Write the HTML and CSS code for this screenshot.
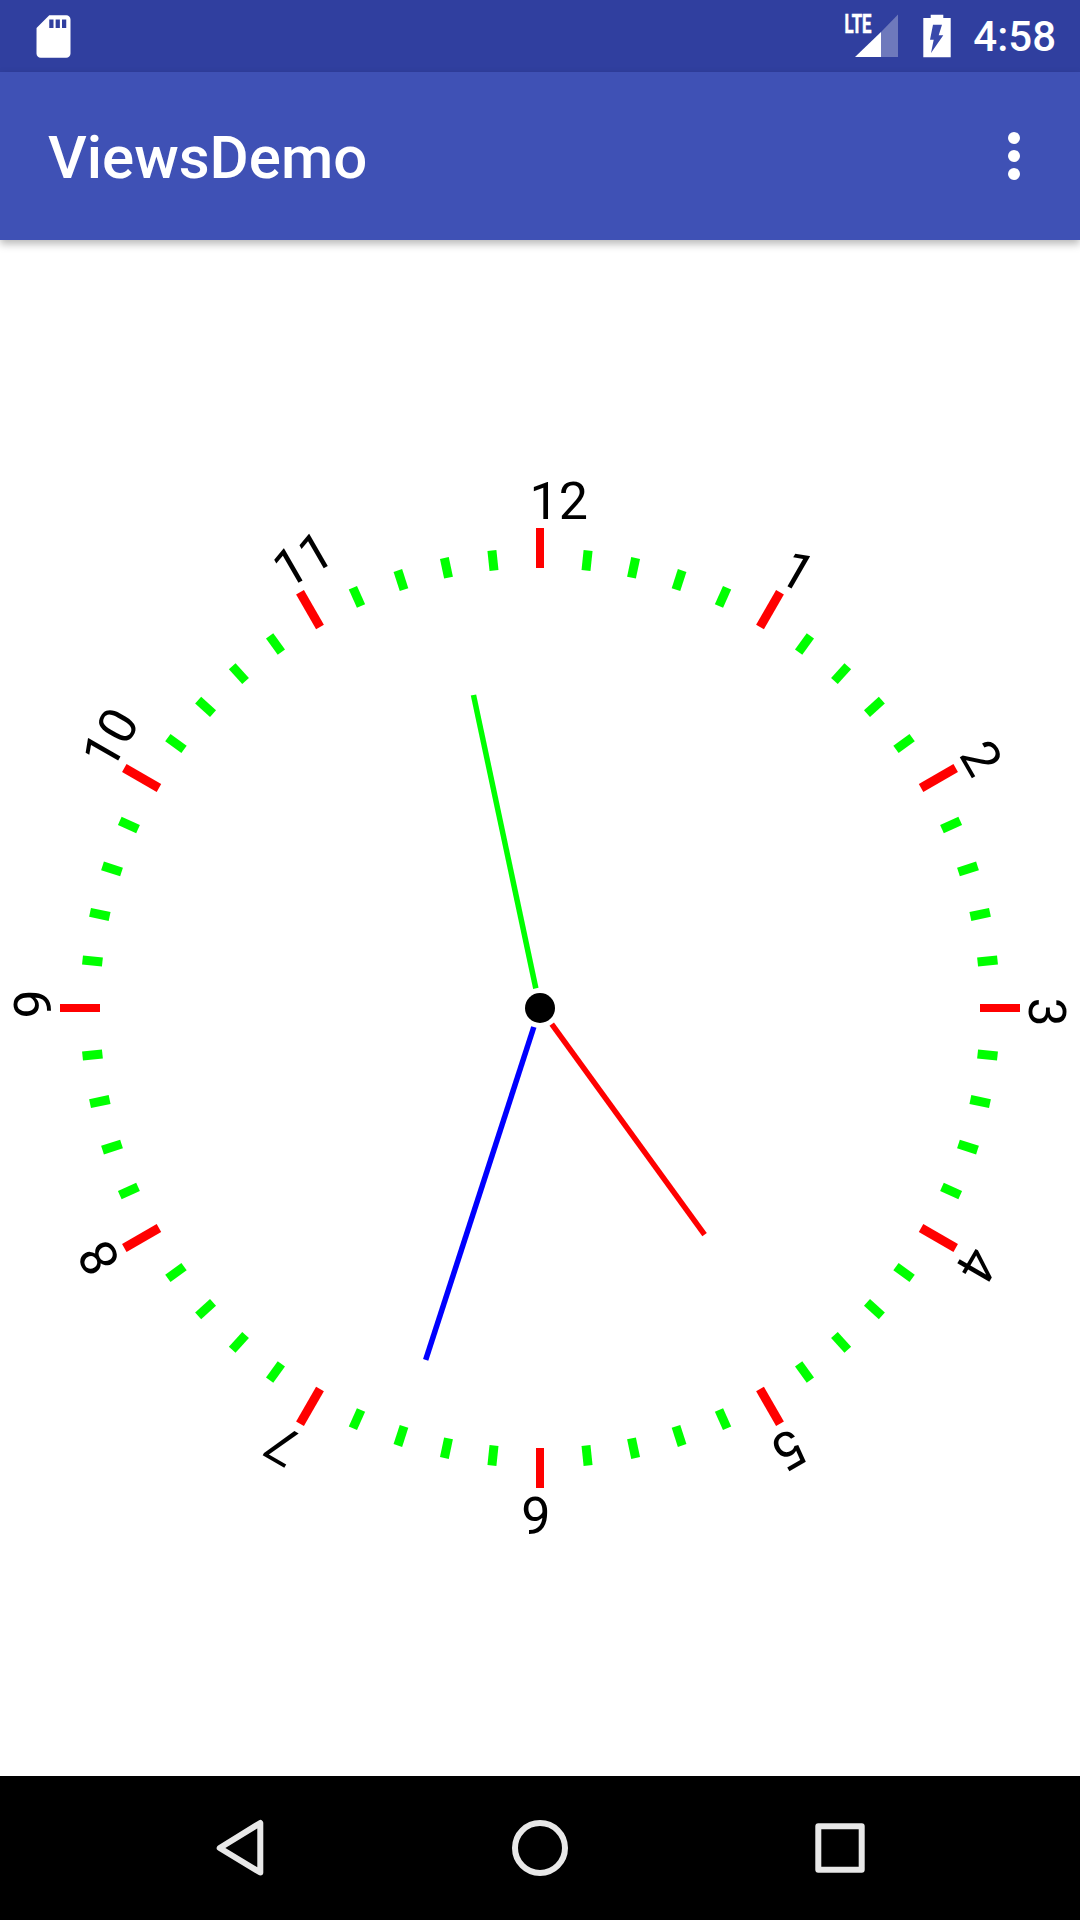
FILE: index.html
```html
<!DOCTYPE html>
<html lang="en">
<head>
    <meta charset="UTF-8">
    <title>ViewsDemo</title>
    <link rel="stylesheet" href="styles.css">
</head>
<body>

    <div class="status-bar">
        <svg class="sd-icon" viewBox="0 0 24 24">
            <path d="M18 2h-8L4.02 8 4 20c0 1.1.9 2 2 2h12c1.1 0 2-.9 2-2V4c0-1.1-.9-2-2-2zm-6 6h-2V4h2v4zm3 0h-2V4h2v4zm3 0h-2V4h2v4z"/>
        </svg>
        <div class="status-right">
            <svg class="status-icons" viewBox="840 8 112 56">
                <text class="lte" x="844.5" y="33.4" textLength="27" lengthAdjust="spacingAndGlyphs">LTE</text>
                <polygon class="signal-empty" points="881,32 898,14.5 898,57 881,57"/>
                <polygon class="signal-full" points="855,57 881,32 881,57"/>
                <path class="battery" d="M930.7 14.7h12.6v3.3h7.4v39.3h-27.4v-39.3h7.4z"/>
                <polygon class="bolt" points="933,24.7 942,24.7 938.7,35.3 943.3,35.3 931,53 933.7,39.7 930,39.7"/>
            </svg>
            <span class="clock-time">4:58</span>
        </div>
    </div>

    <div class="app-bar">
        <h1 class="app-title">ViewsDemo</h1>
        <div class="menu-dots">
            <span class="dot"></span>
            <span class="dot"></span>
            <span class="dot"></span>
        </div>
    </div>

    <div class="content">
        <svg class="clock" viewBox="-540 -768 1080 1536">
            <!-- minute marks -->
            <g class="tick-minor">
                <line y1="-460" y2="-440" transform="rotate(6)"/>
                <line y1="-460" y2="-440" transform="rotate(12)"/>
                <line y1="-460" y2="-440" transform="rotate(18)"/>
                <line y1="-460" y2="-440" transform="rotate(24)"/>
                <line y1="-460" y2="-440" transform="rotate(36)"/>
                <line y1="-460" y2="-440" transform="rotate(42)"/>
                <line y1="-460" y2="-440" transform="rotate(48)"/>
                <line y1="-460" y2="-440" transform="rotate(54)"/>
                <line y1="-460" y2="-440" transform="rotate(66)"/>
                <line y1="-460" y2="-440" transform="rotate(72)"/>
                <line y1="-460" y2="-440" transform="rotate(78)"/>
                <line y1="-460" y2="-440" transform="rotate(84)"/>
                <line y1="-460" y2="-440" transform="rotate(96)"/>
                <line y1="-460" y2="-440" transform="rotate(102)"/>
                <line y1="-460" y2="-440" transform="rotate(108)"/>
                <line y1="-460" y2="-440" transform="rotate(114)"/>
                <line y1="-460" y2="-440" transform="rotate(126)"/>
                <line y1="-460" y2="-440" transform="rotate(132)"/>
                <line y1="-460" y2="-440" transform="rotate(138)"/>
                <line y1="-460" y2="-440" transform="rotate(144)"/>
                <line y1="-460" y2="-440" transform="rotate(156)"/>
                <line y1="-460" y2="-440" transform="rotate(162)"/>
                <line y1="-460" y2="-440" transform="rotate(168)"/>
                <line y1="-460" y2="-440" transform="rotate(174)"/>
                <line y1="-460" y2="-440" transform="rotate(186)"/>
                <line y1="-460" y2="-440" transform="rotate(192)"/>
                <line y1="-460" y2="-440" transform="rotate(198)"/>
                <line y1="-460" y2="-440" transform="rotate(204)"/>
                <line y1="-460" y2="-440" transform="rotate(216)"/>
                <line y1="-460" y2="-440" transform="rotate(222)"/>
                <line y1="-460" y2="-440" transform="rotate(228)"/>
                <line y1="-460" y2="-440" transform="rotate(234)"/>
                <line y1="-460" y2="-440" transform="rotate(246)"/>
                <line y1="-460" y2="-440" transform="rotate(252)"/>
                <line y1="-460" y2="-440" transform="rotate(258)"/>
                <line y1="-460" y2="-440" transform="rotate(264)"/>
                <line y1="-460" y2="-440" transform="rotate(276)"/>
                <line y1="-460" y2="-440" transform="rotate(282)"/>
                <line y1="-460" y2="-440" transform="rotate(288)"/>
                <line y1="-460" y2="-440" transform="rotate(294)"/>
                <line y1="-460" y2="-440" transform="rotate(306)"/>
                <line y1="-460" y2="-440" transform="rotate(312)"/>
                <line y1="-460" y2="-440" transform="rotate(318)"/>
                <line y1="-460" y2="-440" transform="rotate(324)"/>
                <line y1="-460" y2="-440" transform="rotate(336)"/>
                <line y1="-460" y2="-440" transform="rotate(342)"/>
                <line y1="-460" y2="-440" transform="rotate(348)"/>
                <line y1="-460" y2="-440" transform="rotate(354)"/>
            </g>
            <!-- hour marks -->
            <g class="tick-major">
                <line class="tick-straight" y1="-480" y2="-440"/>
                <line y1="-480" y2="-440" transform="rotate(30)"/>
                <line y1="-480" y2="-440" transform="rotate(60)"/>
                <line class="tick-straight" y1="-480" y2="-440" transform="rotate(90)"/>
                <line y1="-480" y2="-440" transform="rotate(120)"/>
                <line y1="-480" y2="-440" transform="rotate(150)"/>
                <line class="tick-straight" y1="-480" y2="-440" transform="rotate(180)"/>
                <line y1="-480" y2="-440" transform="rotate(210)"/>
                <line y1="-480" y2="-440" transform="rotate(240)"/>
                <line class="tick-straight" y1="-480" y2="-440" transform="rotate(270)"/>
                <line y1="-480" y2="-440" transform="rotate(300)"/>
                <line y1="-480" y2="-440" transform="rotate(330)"/>
            </g>
            <g class="numbers">
                <text x="-10.5" y="-489">12</text>
                <text x="-10.5" y="-489" transform="rotate(30)">1</text>
                <text x="-10.5" y="-489" transform="rotate(60)">2</text>
                <text x="-10.5" y="-489" transform="rotate(90)">3</text>
                <text x="-10.5" y="-489" transform="rotate(120)">4</text>
                <text x="-10.5" y="-489" transform="rotate(150)">5</text>
                <text x="-10.5" y="-489" transform="rotate(180)">6</text>
                <text x="-10.5" y="-489" transform="rotate(210)">7</text>
                <text x="-10.5" y="-489" transform="rotate(240)">8</text>
                <text x="-10.5" y="-489" transform="rotate(270)">9</text>
                <text x="-10.5" y="-489" transform="rotate(300)">10</text>
                <text x="-10.5" y="-489" transform="rotate(330)">11</text>
            </g>
            <line class="hand hand-hour" y1="-280" y2="-20" transform="rotate(144)"/>
            <line class="hand hand-minute" y1="-320" y2="-20" transform="rotate(348)"/>
            <line class="hand hand-second" y1="-370" y2="-20" transform="rotate(198)"/>
            <circle class="hub" r="15"/>
        </svg>
    </div>

    <div class="nav-bar">
        <div class="nav-item">
            <svg class="nav-icon" viewBox="-36 -36 72 72"><polygon points="-20.3,0 20.3,-25 20.3,24.5"/></svg>
        </div>
        <div class="nav-item">
            <svg class="nav-icon" viewBox="-36 -36 72 72"><circle r="25"/></svg>
        </div>
        <div class="nav-item">
            <svg class="nav-icon" viewBox="-36 -36 72 72"><rect x="-21.7" y="-21.7" width="43.4" height="43.4"/></svg>
        </div>
    </div>

</body>
</html>
```

FILE: styles.css
```css
body {
    font-family: Roboto, sans-serif;
    margin: 0;
    padding: 0;
    height: 1920px;
    display: flex;
    flex-direction: column;
    background-color: white;
    overflow: hidden;
}

.status-bar {
    height: 72px;
    background-color: #303F9F;
    display: flex;
    align-items: center;
    justify-content: space-between;
    padding: 0 24px 0 28px;
}

.sd-icon {
    width: 51px;
    height: 51px;
    fill: white;
}

.status-right {
    display: flex;
    align-items: center;
}

.status-icons {
    width: 112px;
    height: 56px;
    margin-right: 21px;
}

.lte {
    font-family: "Liberation Sans Narrow", Roboto, sans-serif;
    font-weight: bold;
    font-size: 25px;
    fill: white;
    stroke: white;
    stroke-width: 0.6;
}

.signal-full,
.battery {
    fill: white;
}

.signal-empty {
    fill: white;
    fill-opacity: 0.3;
}

.bolt {
    fill: #3949AB;
}

.clock-time {
    color: white;
    font-size: 42px;
    font-weight: 500;
}

.app-bar {
    height: 168px;
    background-color: #3F51B5;
    display: flex;
    align-items: center;
    justify-content: space-between;
    padding: 0 60px 0 48px;
    box-shadow: 0 4px 8px rgba(0, 0, 0, 0.28);
    position: relative;
}

.app-title {
    margin: 0;
    padding-top: 2px;
    color: white;
    font-size: 60px;
    font-weight: 500;
}

.menu-dots {
    display: flex;
    flex-direction: column;
    gap: 6px;
}

.dot {
    width: 12px;
    height: 12px;
    border-radius: 50%;
    background-color: white;
}

.content {
    flex: 1;
    display: flex;
}

.clock {
    width: 1080px;
    height: 1536px;
}

.tick-minor line {
    stroke: #00FF00;
    stroke-width: 9;
}

.tick-major line {
    stroke: #FF0000;
    stroke-width: 9;
}

.tick-major .tick-straight {
    stroke-width: 8;
}

.numbers text {
    font-family: Roboto, sans-serif;
    font-size: 52px;
    fill: black;
}

.hand {
    stroke-width: 5.5;
}

.hand-hour {
    stroke: #FF0000;
}

.hand-minute {
    stroke: #00FF00;
}

.hand-second {
    stroke: #0000FF;
}

.hub {
    fill: black;
}

.nav-bar {
    height: 144px;
    background-color: black;
    display: flex;
    align-items: center;
    padding: 0 90px;
}

.nav-item {
    flex: 1;
    display: flex;
    justify-content: center;
}

.nav-icon {
    width: 72px;
    height: 72px;
    fill: none;
    stroke: #E8E8E8;
    stroke-width: 6;
    stroke-linejoin: round;
}
```
